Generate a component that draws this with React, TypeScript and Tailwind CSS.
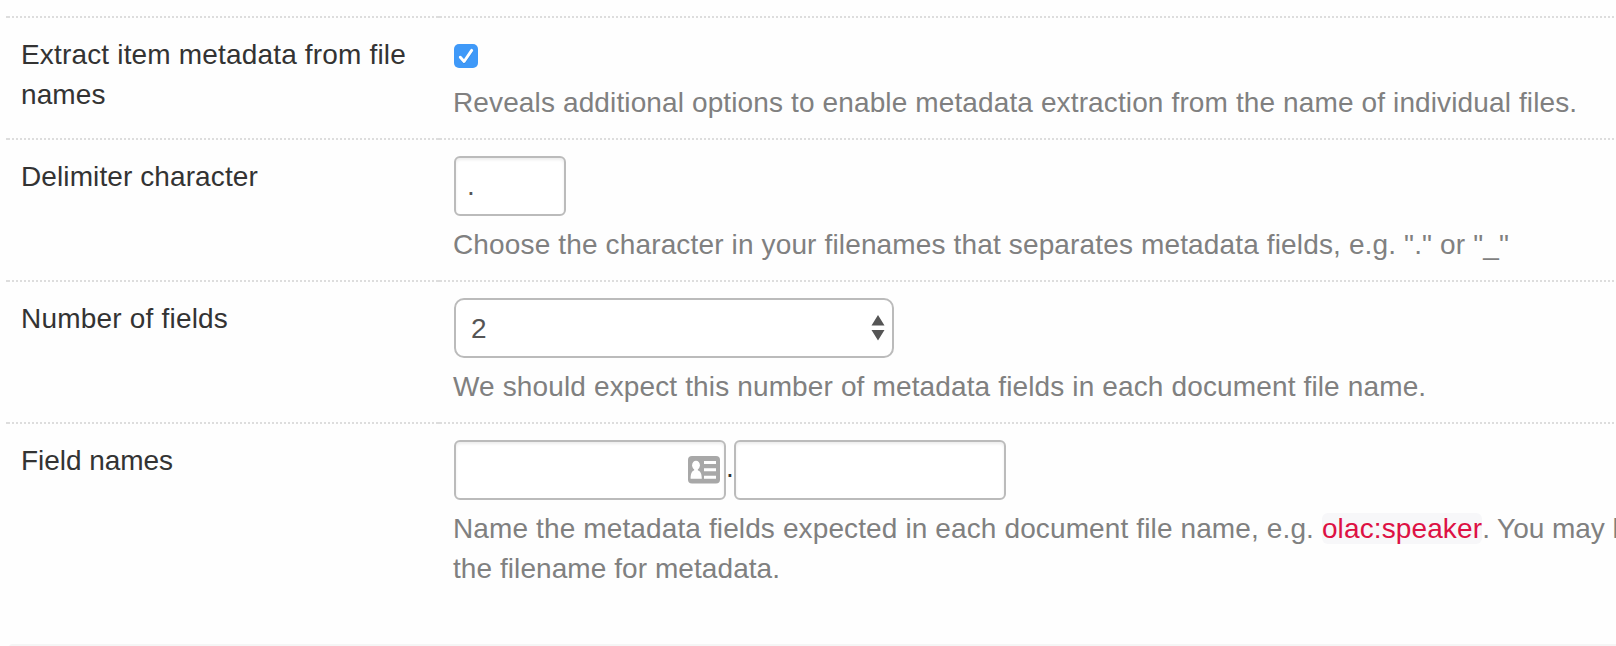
import React, { type ReactNode } from "react";

function DottedRule() {
  return (
    <div className="flex h-0.5 w-full">
      <div className="w-0.5 shrink-0 bg-[#ddd]" />
      <div className="w-[430px] shrink-0 bg-[repeating-linear-gradient(90deg,#ddd_0_2px,transparent_2px_4px)]" />
      <div className="w-0.5 shrink-0 bg-[#ddd]" />
      <div className="grow bg-[repeating-linear-gradient(90deg,#ddd_0_2px,transparent_2px_4px)]" />
    </div>
  );
}

function Row({ label, className, children }: { label: ReactNode; className: string; children: ReactNode }) {
  return (
    <section className={className}>
      <DottedRule />
      <div className="flex py-4 pl-[15px]">
        <div className="w-[433px] shrink-0 pt-px text-[#333]">{label}</div>
        <div className="grow">{children}</div>
      </div>
    </section>
  );
}

function Help({ className, children }: { className: string; children: ReactNode }) {
  return <p className={`-ml-px whitespace-nowrap text-[#808080] ${className}`}>{children}</p>;
}

const field =
  "h-[60px] rounded-[6px] border-2 border-[#bbb] bg-white text-[28px] leading-10 text-[#555] outline-none shadow-[inset_0_2px_3px_rgba(0,0,0,0.075)]";

function ContactIcon() {
  return (
    <svg width="32" height="28" viewBox="0 0 32 28" className="block shrink-0">
      <rect width="32" height="27.5" rx="4" fill="#a8a8a8" />
      <ellipse cx="8" cy="9.2" rx="3.9" ry="4.5" fill="#fff" />
      <path d="M6.2 12h3.6v2.2c2.600.8 4 3.400 4 8.600H2.600c0-5.200 1.200-7.800 3.600-8.600z" fill="#fff" />
      <path d="M16 5h12v3H16zM16 12.200h12v3H16zM16 19.700h12v3H16z" fill="#fff" />
    </svg>
  );
}

export default function App() {
  return (
    <main className="h-[646px] w-full overflow-hidden bg-[#fefefe] pt-4 pl-1.5 font-['Liberation_Sans',Arial,sans-serif] text-[28px] leading-10">
      <Row
        className="h-[122px]"
        label={
          <>
            <span className="tracking-[0.17px]">Extract item metadata from file</span>
            <br />
            <span className="tracking-[0.1px]">names</span>
          </>
        }
      >
        <div className="flex h-[49px] pt-2.5">
          <button type="button" role="checkbox" aria-checked="true" className="size-6 rounded-[5px] bg-[#3f99f8]">
            <svg width="24" height="24" viewBox="0 0 24 24" fill="none" strokeLinecap="round" strokeLinejoin="round">
              <path d="M6.500 14.200l3.700 4.300L17.800 7.400" stroke="#2577cf" strokeOpacity=".5" strokeWidth="2.600" />
              <path d="M6.300 13.200l3.800 4.300L17.700 6.400" stroke="#fff" strokeWidth="2.900" />
            </svg>
          </button>
        </div>
        <Help className="tracking-[0.125px]">
          Reveals additional options to enable metadata extraction from the name of individual files.
        </Help>
      </Row>

      <Row className="h-[142px]" label={<span className="tracking-[0.1px]">Delimiter character</span>}>
        <input aria-label="Delimiter character" defaultValue="." className={`${field} mb-[9px] block w-[112px] pl-[11px]`} />
        <Help className="tracking-[0.145px]">
          Choose the character in your filenames that separates metadata fields, e.g. "." or "_"
        </Help>
      </Row>

      <Row className="h-[142px]" label={<span className="tracking-[0.2px]">Number of fields</span>}>
        <div className="mb-[9px] flex h-[60px] w-[440px] items-center justify-between rounded-[10px] border-2 border-[#bbb] bg-white pr-[7px] pl-[15px] text-[#555]">
          <span className="pt-0.5">2</span>
          <svg width="14" height="26" viewBox="0 0 14 26" fill="#555">
            <path d="M7 0l6.500 10.500H.5zM.5 15h13L7 25.500z" />
          </svg>
        </div>
        <Help className="tracking-[0.138px]">
          We should expect this number of metadata fields in each document file name.
        </Help>
      </Row>

      <Row className="h-[204px]" label={<span className="tracking-[-0.05px]">Field names</span>}>
        <div className="mb-[9px] flex">
          <div className={`${field} flex w-[272px] justify-end pt-3.5 pr-1`}>
            <input aria-label="First field name" className="h-7 min-w-0 grow bg-transparent outline-none" />
            <ContactIcon />
          </div>
          <span className="w-2 pt-2 text-[#333]">.</span>
          <input aria-label="Second field name" className={`${field} block w-[272px]`} />
        </div>
        <Help className="tracking-[0.122px]">
          Name the metadata fields expected in each document file name, e.g.{" "}
          <code className="rounded-[6px] bg-[#f7f7f9] font-['Liberation_Sans',Arial,sans-serif] text-[28px] text-[#dd1144]">
            olac:speaker
          </code>
          <span className="tracking-[-0.05px]">. You may l</span>
        </Help>
        <Help className="tracking-[0.07px]">the filename for metadata.</Help>
      </Row>

      <div className="mt-[18px] ml-[3px] h-4 rounded-tl-[3px] border-t-2 border-[#f5f5f5]" />
    </main>
  );
}
